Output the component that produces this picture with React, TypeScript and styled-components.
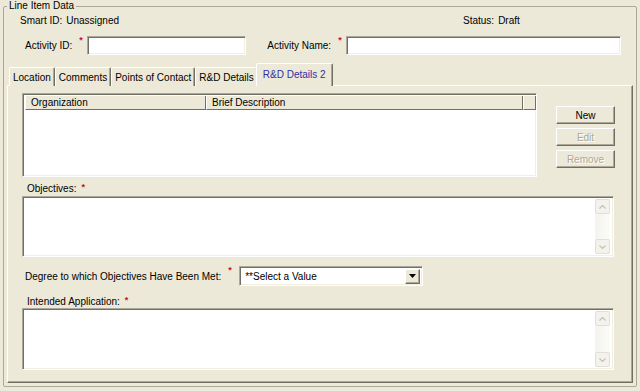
import React from 'react';
import styled, { createGlobalStyle } from 'styled-components';

const GlobalStyle = createGlobalStyle`
  html, body {
    margin: 0;
    padding: 0;
    background: #ece9d8;
  }
  body {
    font-family: "Liberation Sans", Arial, sans-serif;
    font-size: 10px;
    color: #000;
  }
  * {
    box-sizing: border-box;
  }
`;

const tabs = ['Location', 'Comments', 'Points of Contact', 'R&D Details', 'R&D Details 2'];

const ChevronUp = () => (
  <svg width="7" height="4" viewBox="0 0 7 4">
    <path d="M0.5 3.5 L3.5 0.5 L6.5 3.5" fill="none" stroke="#c4c1b2" strokeWidth="1.2" />
  </svg>
);

const ChevronDown = () => (
  <svg width="7" height="4" viewBox="0 0 7 4">
    <path d="M0.5 0.5 L3.5 3.5 L6.5 0.5" fill="none" stroke="#c4c1b2" strokeWidth="1.2" />
  </svg>
);

const MemoBox: React.FC<{ height: number }> = ({ height }) => (
  <Memo $height={height}>
    <MemoText />
    <ScrollBar>
      <ScrollButton>
        <ChevronUp />
      </ScrollButton>
      <ScrollTrack />
      <ScrollButton>
        <ChevronDown />
      </ScrollButton>
    </ScrollBar>
  </Memo>
);

const App: React.FC = () => {
  return (
    <Page>
      <GlobalStyle />
      <GroupBox>
        <Legend>Line Item Data</Legend>

        <InfoRow>
          <InfoPair>
            <span>Smart ID:</span>
            <span>Unassigned</span>
          </InfoPair>
          <InfoPair>
            <span>Status:</span>
            <span>Draft</span>
          </InfoPair>
        </InfoRow>

        <FieldRow>
          <Label>Activity ID:</Label>
          <Req>*</Req>
          <TextInput $width={159} />
          <Label $gap={21}>Activity Name:</Label>
          <Req>*</Req>
          <TextInput $width={275} />
        </FieldRow>

        <TabStrip>
          {tabs.map((t, i) => (
            <Tab key={t} $active={i === tabs.length - 1}>
              {t}
            </Tab>
          ))}
        </TabStrip>

        <TabPanel>
          <TopSection>
            <ListView>
              <ListHeader>
                <HeaderCell $width={181}>Organization</HeaderCell>
                <HeaderCell $width={317}>Brief Description</HeaderCell>
                <HeaderCell $width={13} />
              </ListHeader>
            </ListView>
            <ButtonColumn>
              <PushButton>New</PushButton>
              <PushButton disabled>Edit</PushButton>
              <PushButton disabled>Remove</PushButton>
            </ButtonColumn>
          </TopSection>

          <SectionLabel $top={6} $bottom={1}>
            Objectives:<Req $inline>*</Req>
          </SectionLabel>
          <MemoBox height={61} />

          <SelectRow>
            <Label>Degree to which Objectives Have Been Met:</Label>
            <Req>*</Req>
            <Select>
              <SelectText>**Select a Value</SelectText>
              <DropButton>
                <svg width="7" height="4" viewBox="0 0 7 4">
                  <path d="M0 0 H7 L3.5 4 Z" fill="#000" />
                </svg>
              </DropButton>
            </Select>
          </SelectRow>

          <SectionLabel $top={10} $bottom={0}>
            Intended Application:<Req $inline>*</Req>
          </SectionLabel>
          <MemoBox height={62} />
        </TabPanel>
      </GroupBox>
    </Page>
  );
};

const Page = styled.div`
  width: 640px;
  height: 391px;
  padding: 0 3px;
  overflow: hidden;
`;

const GroupBox = styled.fieldset`
  margin: 0;
  width: 634px;
  height: 387px;
  padding: 0 3px;
  border: 1px solid #aca899;
  border-radius: 2px;
`;

const Legend = styled.legend`
  padding: 0 2px;
  margin-left: 0;
  line-height: 12px;
  font-size: 10px;
`;

const InfoRow = styled.div`
  display: grid;
  grid-template-columns: 443px 1fr;
  height: 14px;
  align-items: center;
  padding-left: 13px;
  margin-top: 1px;
`;

const InfoPair = styled.div`
  display: flex;
  gap: 4px;
`;

const FieldRow = styled.div`
  display: flex;
  align-items: center;
  height: 19px;
  margin-top: 9px;
  padding-left: 18px;
`;

const Label = styled.span<{ $gap?: number }>`
  margin-left: ${(p) => p.$gap ?? 0}px;
  white-space: nowrap;
`;

const Req = styled.span<{ $inline?: boolean }>`
  display: inline-block;
  align-self: flex-start;
  width: ${(p) => (p.$inline ? 'auto' : '8px')};
  margin-left: ${(p) => (p.$inline ? 5 : 7)}px;
  color: #c8102e;
  font-size: 9px;
  font-weight: bold;
  line-height: 8px;
  vertical-align: top;
`;

const sunken = `
  background: #fff;
  border: 1px solid;
  border-color: #aca899 #fff #fff #aca899;
  box-shadow: inset 1px 1px 0 #716f64, inset -1px -1px 0 #f1efe2;
`;

const raised = `
  background: #ece9d8;
  border: 1px solid;
  border-color: #fff #716f64 #716f64 #fff;
  box-shadow: inset -1px -1px 0 #aca899;
`;

const TextInput = styled.div<{ $width: number }>`
  ${sunken}
  width: ${(p) => p.$width}px;
  height: 19px;
`;

const TabStrip = styled.div`
  display: flex;
  align-items: flex-end;
  height: 23px;
  margin-top: 8px;
  padding-left: 2px;
  position: relative;
  z-index: 1;
  margin-bottom: -1px;
`;

const Tab = styled.div<{ $active?: boolean }>`
  display: flex;
  align-items: center;
  height: ${(p) => (p.$active ? 23 : 19)}px;
  padding: 0 ${(p) => (p.$active ? 6 : 3)}px ${(p) => (p.$active ? 1 : 0)}px;
  margin: 0 ${(p) => (p.$active ? -2 : 0)}px;
  background: #ece9d8;
  border: 1px solid;
  border-bottom: none;
  border-color: #fff #716f64 transparent #fff;
  border-radius: 2px 2px 0 0;
  box-shadow: inset -1px 0 0 #aca899;
  color: ${(p) => (p.$active ? '#2f2fa6' : '#000')};
  white-space: nowrap;
  ${(p) => (p.$active ? 'z-index: 2; position: relative;' : '')}
`;

const TabPanel = styled.div`
  width: 626px;
  height: 298px;
  padding: 7px 0 0 14px;
  border: 1px solid;
  border-color: #fff #716f64 #716f64 #fff;
  box-shadow: inset -1px -1px 0 #aca899;
`;

const TopSection = styled.div`
  display: flex;
  align-items: flex-start;
`;

const ListView = styled.div`
  ${sunken}
  width: 515px;
  height: 84px;
  padding: 2px 0 0 2px;
`;

const ListHeader = styled.div`
  display: flex;
  height: 14px;
`;

const HeaderCell = styled.div<{ $width: number }>`
  width: ${(p) => p.$width}px;
  height: 14px;
  padding-left: 5px;
  line-height: 13px;
  background: #ece9d8;
  border-right: 1px solid #716f64;
  border-left: 1px solid #fff;
  border-bottom: 1px solid #716f64;
  white-space: nowrap;
`;

const ButtonColumn = styled.div`
  display: flex;
  flex-direction: column;
  gap: 4px;
  margin-left: 19px;
  padding-top: 13px;
`;

const PushButton = styled.button`
  ${raised}
  width: 59px;
  height: 18px;
  padding: 0;
  font-family: inherit;
  font-size: 10px;
  color: #000;
  &:disabled {
    color: #aca899;
    text-shadow: 1px 1px 0 #fff;
  }
`;

const SectionLabel = styled.div<{ $top: number; $bottom: number }>`
  height: 12px;
  line-height: 12px;
  margin: ${(p) => p.$top}px 0 ${(p) => p.$bottom}px;
  padding-left: 5px;
  display: flex;
  align-items: flex-start;
`;

const Memo = styled.div<{ $height: number }>`
  ${sunken}
  display: flex;
  width: 592px;
  height: ${(p) => p.$height}px;
  padding: 2px;
`;

const MemoText = styled.div`
  flex: 1;
`;

const ScrollBar = styled.div`
  width: 15px;
  display: flex;
  flex-direction: column;
  background: #f7f6f1;
  margin-right: 1px;
`;

const ScrollButton = styled.div`
  height: 15px;
  display: flex;
  align-items: center;
  justify-content: center;
  background: #f3f2ec;
  border: 1px solid #e2e0d6;
  border-radius: 2px;
`;

const ScrollTrack = styled.div`
  flex: 1;
  background: linear-gradient(to right, #f4f3ee, #fbfbf9);
`;

const SelectRow = styled.div`
  display: flex;
  align-items: center;
  height: 20px;
  margin-top: 9px;
  padding-left: 3px;
`;

const Select = styled.div`
  ${sunken}
  display: flex;
  align-items: center;
  width: 184px;
  height: 20px;
  padding: 2px 2px 2px 5px;
  margin-left: 3px;
`;

const SelectText = styled.span`
  flex: 1;
`;

const DropButton = styled.div`
  ${raised}
  width: 15px;
  height: 15px;
  display: flex;
  align-items: center;
  justify-content: center;
`;

export default App;
